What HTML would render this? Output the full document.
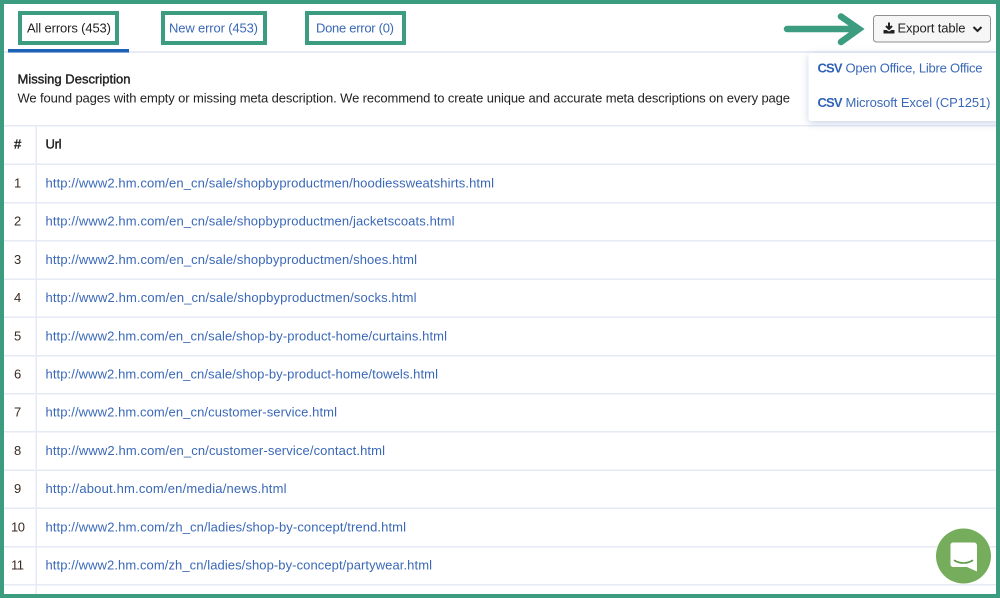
<!DOCTYPE html>
<html><head><meta charset="utf-8"><style>
html,body{margin:0;padding:0;background:#fff}
svg{display:block}
text{font-family:"Liberation Sans",sans-serif;font-size:13px}
.l{fill:#3a68b8}
.d{fill:#222}
.n{fill:#3a2a20}
.b{stroke:#222;stroke-width:.4}
</style></head><body>
<svg width="1000" height="598" viewBox="0 0 1000 598" xmlns="http://www.w3.org/2000/svg">
<defs>
<filter id="s" x="-15%" y="-25%" width="130%" height="160%"><feDropShadow dx="0" dy="2" stdDeviation="4" flood-color="#8a9ac8" flood-opacity=".45"/></filter>
</defs>
<rect width="1000" height="598" fill="#fff"/>
<!-- tab underline -->
<rect x="4" y="51" width="992" height="2" fill="#e8ebf5"/>
<rect x="8" y="49" width="121" height="3.5" fill="#1d62b5"/>
<!-- table lines -->
<g fill="#e6eaf5">
<rect x="4" y="125" width="992" height="1.5"/>
<rect x="4" y="163.5" width="992" height="1.5"/>
<rect x="4" y="202" width="992" height="1.5"/>
<rect x="4" y="240" width="992" height="1.5"/>
<rect x="4" y="278.5" width="992" height="1.5"/>
<rect x="4" y="316.5" width="992" height="1.5"/>
<rect x="4" y="355" width="992" height="1.5"/>
<rect x="4" y="393" width="992" height="1.5"/>
<rect x="4" y="431" width="992" height="1.5"/>
<rect x="4" y="469.5" width="992" height="1.5"/>
<rect x="4" y="507.5" width="992" height="1.5"/>
<rect x="4" y="546" width="992" height="1.5"/>
<rect x="4" y="584" width="992" height="1.5"/>
<rect x="35.5" y="125" width="1.5" height="469"/>
</g>
<!-- tabs -->
<text x="27" y="32.5" class="d" textLength="84" lengthAdjust="spacing">All errors (453)</text>
<text x="169" y="32.5" class="l" textLength="89" lengthAdjust="spacing">New error (453)</text>
<text x="316" y="32.5" class="l" textLength="78" lengthAdjust="spacing">Done error (0)</text>
<g fill="none" stroke="#3b9c7f" stroke-width="4">
<rect x="20" y="13" width="97" height="30"/>
<rect x="163" y="13" width="102" height="30"/>
<rect x="307" y="13" width="97" height="30"/>
</g>
<!-- description -->
<text x="17.5" y="83.5" class="d b" textLength="113" lengthAdjust="spacing">Missing Description</text>
<text x="17.5" y="102.5" class="d" textLength="772.5" lengthAdjust="spacing">We found pages with empty or missing meta description. We recommend to create unique and accurate meta descriptions on every page</text>
<!-- table header -->
<text x="14" y="148.5" class="d b">#</text>
<text x="45.5" y="148.5" class="d b" textLength="16" lengthAdjust="spacing">Url</text>
<!-- rows -->
<text x="14" y="187.500" class="n">1</text>
<text x="14" y="225.500" class="n">2</text>
<text x="14" y="264" class="n">3</text>
<text x="14" y="302" class="n">4</text>
<text x="14" y="340.500" class="n">5</text>
<text x="14" y="378.500" class="n">6</text>
<text x="14" y="416.500" class="n">7</text>
<text x="14" y="455" class="n">8</text>
<text x="14" y="493" class="n">9</text>
<text x="11" y="531.500" class="n" textLength="14" lengthAdjust="spacing">10</text>
<text x="11" y="569.500" class="n" textLength="13" lengthAdjust="spacing">11</text>
<text x="45.5" y="187.500" class="l" textLength="448.500" lengthAdjust="spacing">http://www2.hm.com/en_cn/sale/shopbyproductmen/hoodiessweatshirts.html</text>
<text x="45.5" y="225.500" class="l" textLength="409" lengthAdjust="spacing">http://www2.hm.com/en_cn/sale/shopbyproductmen/jacketscoats.html</text>
<text x="45.5" y="264" class="l" textLength="371.500" lengthAdjust="spacing">http://www2.hm.com/en_cn/sale/shopbyproductmen/shoes.html</text>
<text x="45.5" y="302" class="l" textLength="371" lengthAdjust="spacing">http://www2.hm.com/en_cn/sale/shopbyproductmen/socks.html</text>
<text x="45.5" y="340.500" class="l" textLength="401.500" lengthAdjust="spacing">http://www2.hm.com/en_cn/sale/shop-by-product-home/curtains.html</text>
<text x="45.5" y="378.500" class="l" textLength="392.500" lengthAdjust="spacing">http://www2.hm.com/en_cn/sale/shop-by-product-home/towels.html</text>
<text x="45.5" y="416.500" class="l" textLength="291.500" lengthAdjust="spacing">http://www2.hm.com/en_cn/customer-service.html</text>
<text x="45.5" y="455" class="l" textLength="339.500" lengthAdjust="spacing">http://www2.hm.com/en_cn/customer-service/contact.html</text>
<text x="45.5" y="493" class="l" textLength="241" lengthAdjust="spacing">http://about.hm.com/en/media/news.html</text>
<text x="45.5" y="531.500" class="l" textLength="360.500" lengthAdjust="spacing">http://www2.hm.com/zh_cn/ladies/shop-by-concept/trend.html</text>
<text x="45.5" y="569.500" class="l" textLength="386.500" lengthAdjust="spacing">http://www2.hm.com/zh_cn/ladies/shop-by-concept/partywear.html</text>
<!-- dropdown -->
<rect x="808.5" y="53" width="200" height="68" rx="3" fill="#fff" filter="url(#s)"/>
<text x="817.5" y="72.5" fill="#2f62b4" style="font-weight:bold" textLength="25" lengthAdjust="spacing">CSV</text>
<text x="845.5" y="72.5" class="l" textLength="137" lengthAdjust="spacing">Open Office, Libre Office</text>
<text x="817.5" y="107" fill="#2f62b4" style="font-weight:bold" textLength="25" lengthAdjust="spacing">CSV</text>
<text x="845.5" y="107" class="l" textLength="145" lengthAdjust="spacing">Microsoft Excel (CP1251)</text>
<!-- button -->
<rect x="873.5" y="15.5" width="117" height="26.5" rx="3" fill="#f6f6f6" stroke="#8f8f8f"/>
<path d="M889 22.500v6M886 26l3 3 3-3" fill="none" stroke="#222" stroke-width="2"/>
<path d="M883.500 30h3l2.500 1.500 2.500-1.500h3v3.500h-11z" fill="#222"/>
<text x="897.500" y="32.500" class="d" textLength="68" lengthAdjust="spacing">Export table</text>
<path d="M973.500 27l4 4 4-4" fill="none" stroke="#222" stroke-width="2"/>
<!-- arrow -->
<path d="M787 29H858M841 16.500L859 29 841 42" fill="none" stroke="#3b9c7f" stroke-width="6.500" stroke-linecap="round" stroke-linejoin="miter"/>
<!-- chat -->
<circle cx="963.500" cy="556" r="27.500" fill="#76ad5d"/>
<path d="M953 542.500h21a3 3 0 0 1 3 3V571.500l-10-4.500H953a2.500 2.500 0 0 1-2.500-2.500V545a2.500 2.500 0 0 1 2.500-2.500z" fill="#fff"/>
<path d="M954.500 560.500q9 5 18 0" fill="none" stroke="#5f9a48" stroke-width="1.600" stroke-linecap="round"/>
<!-- frame -->
<rect x="2" y="2" width="996" height="594" fill="none" stroke="#3b9c7f" stroke-width="4"/>
</svg>
</body></html>
